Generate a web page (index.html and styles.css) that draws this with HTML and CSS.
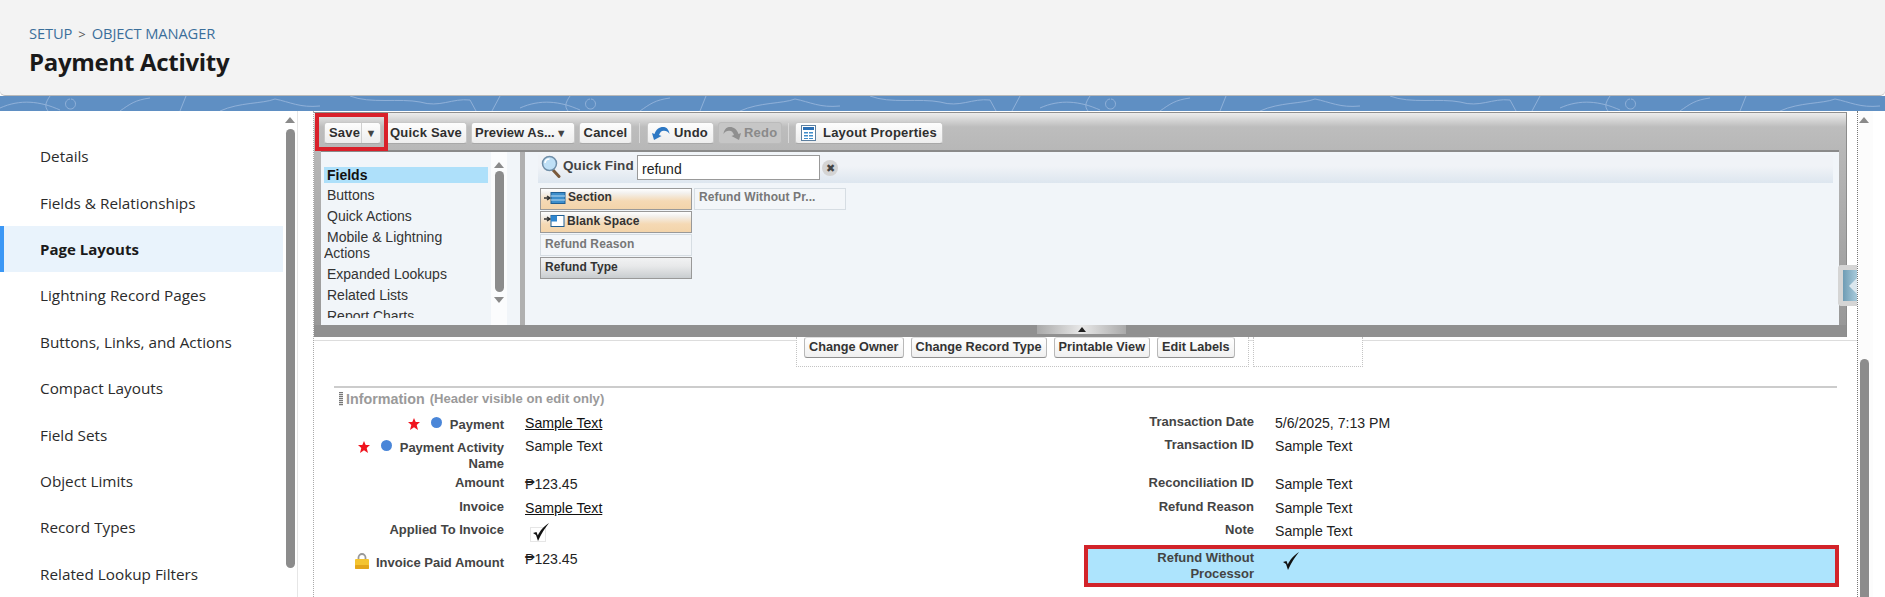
FILE: index.html
```html
<!DOCTYPE html>
<html lang="en">
<head>
<meta charset="utf-8">
<title>Payment Activity</title>
<link rel="stylesheet" href="styles.css">
</head>
<body>
<div class="app">
  <header class="header">
    <div class="crumbs"><span>SETUP</span><span class="crumb-sep">&gt;</span><span>OBJECT MANAGER</span></div>
    <h1 class="title">Payment Activity</h1>
  </header>
  <div class="band">
    <svg class="band-art" width="100%" height="15" aria-hidden="true">
      <defs>
        <pattern id="topo" width="520" height="15" patternUnits="userSpaceOnUse">
          <path d="M0 12C20 3 40 5 60 14M50 0C46 6 44 10 48 15M70 3a5 5 0 1 0 1 0M120 15C130 8 135 4 150 2M186 0L180 15M220 15C240 6 262 8 275 3C290 6 300 12 320 10M350 0C370 8 400 2 420 6C440 12 452 2 470 4L476 15M500 0L492 15" fill="none" stroke="#8fb0d8" stroke-width="1"/>
        </pattern>
      </defs>
      <rect width="100%" height="15" fill="url(#topo)"/>
    </svg>
  </div>
  <div class="main">
    <aside class="side">
      <nav class="side-list">
        <a class="side-item">Details</a>
        <a class="side-item">Fields &amp; Relationships</a>
        <a class="side-item is-active">Page Layouts</a>
        <a class="side-item">Lightning Record Pages</a>
        <a class="side-item">Buttons, Links, and Actions</a>
        <a class="side-item">Compact Layouts</a>
        <a class="side-item">Field Sets</a>
        <a class="side-item">Object Limits</a>
        <a class="side-item">Record Types</a>
        <a class="side-item">Related Lookup Filters</a>
      </nav>
      <div class="scroll side-scroll"><i class="arrow-up"></i><i class="thumb"></i></div>
    </aside>
    <section class="page">
      <div class="palette">
        <div class="toolbar">
          <button class="tb tb-save"><span class="save-text">Save</span><span class="caret-cell">▼</span></button>
          <button class="tb tb-quick">Quick Save</button>
          <button class="tb tb-preview">Preview As...<span class="caret">▼</span></button>
          <button class="tb tb-cancel">Cancel</button>
          <i class="tb-sep"></i>
          <button class="tb tb-undo">
            <svg width="20" height="16" viewBox="0 0 20 16"><path d="M3 15 1 8l2.500 1C5 4 9 1.500 13 2c3 .4 5 3 5.500 7-1.500-2.500-3.500-3.500-6-3.300C10.500 5.900 9 7 8 10l2.500 1z" fill="#2d78c4"/></svg>Undo</button>
          <button class="tb tb-redo">
            <svg width="20" height="16" viewBox="0 0 20 16"><path d="M17 15l2-7-2.500 1C15 4 11 1.500 7 2 4 2.400 2 5 1.500 9c1.500-2.500 3.500-3.500 6-3.300C9.500 5.900 11 7 12 10l-2.500 1z" fill="#8f8f8f"/></svg>Redo</button>
          <i class="tb-sep tb-sep-tight"></i>
          <button class="tb tb-props">
            <svg width="15" height="16" viewBox="0 0 15 16"><rect x=".5" y=".5" width="14" height="15" fill="#fff" stroke="#5c7f9f"/><rect x="2" y="2" width="11" height="3" fill="#2a6fb5"/><path d="M3 7h4v1.500H3zM8 7h4v1.500H8zM3 10h4v1.500H3zM8 10h4v1.500H8zM3 13h4v1H3zM8 13h4v1H8z" fill="#3f8cc9"/></svg>Layout Properties</button>
          <div class="annot annot-save"></div>
        </div>
        <div class="pal-body">
          <div class="pal-left">
            <ul class="cat-list">
              <li class="cat is-current">Fields</li>
              <li class="cat">Buttons</li>
              <li class="cat">Quick Actions</li>
              <li class="cat">Mobile &amp; Lightning Actions</li>
              <li class="cat">Expanded Lookups</li>
              <li class="cat">Related Lists</li>
              <li class="cat cat-cut">Report Charts</li>
            </ul>
            <div class="scroll cat-scroll"><i class="arrow-up"></i><i class="thumb"></i><i class="arrow-down"></i></div>
          </div>
          <div class="pal-right">
            <div class="quick">
              <svg class="lens" width="20" height="23" viewBox="0 0 20 23"><path d="M12 15l6 6.500" stroke="#7a5a3c" stroke-width="3" stroke-linecap="round"/><circle cx="8.500" cy="8.500" r="7" fill="#bfe0f6" stroke="#6f8ea8" stroke-width="1.500"/><path d="M4 8a4.500 4.500 0 0 1 4.500-4" stroke="#fff" stroke-width="1.500" fill="none"/></svg>
              <label class="quick-label">Quick Find</label>
              <input class="quick-input" value="refund">
              <span class="quick-clear">✖</span>
            </div>
            <div class="items">
              <div class="item item-add item-section"><svg width="23" height="14" viewBox="0 0 23 14"><path d="M1 7h5M4 5l3 2-3 2" stroke="#333" stroke-width="1.500" fill="none"/><rect x="8" y="1.500" width="14" height="11" fill="#3d8ecb" stroke="#1f5f94"/><path d="M8 5h14M8 9h14" stroke="#bcdcf2"/></svg>Section</div>
              <div class="item item-add"><svg width="22" height="14" viewBox="0 0 22 14"><path d="M1 5h5M4 3l3 2-3 2" stroke="#333" stroke-width="1.500" fill="none"/><rect x="8" y="1.500" width="13" height="11" fill="#fff" stroke="#1f5f94"/><rect x="8" y="1.500" width="6" height="6" fill="#2f86cf"/></svg>Blank Space</div>
              <div class="item item-used">Refund Reason</div>
              <div class="item item-field">Refund Type</div>
              <div class="item item-used item-section">Refund Without Pr...</div>
            </div>
          </div>
        </div>
        <div class="pal-foot"><span class="handle"><i class="handle-tri"></i></span></div>
      </div>
      <div class="actions">
        <div class="act-box">
          <button class="act">Change Owner</button>
          <button class="act">Change Record Type</button>
          <button class="act">Printable View</button>
          <button class="act">Edit Labels</button>
        </div>
        <div class="act-box act-box-empty"></div>
      </div>
      <div class="sec-head">
        <i class="grip"></i><span class="sec-title">Information</span><span class="sec-note">(Header visible on edit only)</span>
      </div>
      <div class="form">
        <div class="field">
          <div class="label p5"><svg class="star" width="12" height="12" viewBox="0 0 12 12"><path d="M6 0l1.700 4H12L8.700 7l1.300 5L6 9.300 2 12l1.300-5L0 4h4.300z" fill="#f0141e"/></svg><i class="dot"></i>Payment</div>
          <div class="value p3"><u>Sample Text</u></div>
        </div>
        <div class="field">
          <div class="label p2">Transaction Date</div>
          <div class="value p3">5/6/2025, 7:13 PM</div>
        </div>
        <div class="field">
          <div class="label p5"><svg class="star" width="12" height="12" viewBox="0 0 12 12"><path d="M6 0l1.700 4H12L8.700 7l1.300 5L6 9.300 2 12l1.300-5L0 4h4.300z" fill="#f0141e"/></svg><i class="dot"></i>Payment Activity<br>Name</div>
          <div class="value p3">Sample Text</div>
        </div>
        <div class="field">
          <div class="label p2">Transaction ID</div>
          <div class="value p3">Sample Text</div>
        </div>
        <div class="field">
          <div class="label p2">Amount</div>
          <div class="value p3">₱123.45</div>
        </div>
        <div class="field">
          <div class="label p2">Reconciliation ID</div>
          <div class="value p3">Sample Text</div>
        </div>
        <div class="field">
          <div class="label p3">Invoice</div>
          <div class="value p4"><u>Sample Text</u></div>
        </div>
        <div class="field">
          <div class="label p3">Refund Reason</div>
          <div class="value p4">Sample Text</div>
        </div>
        <div class="field">
          <div class="label p3">Applied To Invoice</div>
          <div class="value check-cell"><svg class="check" width="22" height="20" viewBox="0 0 22 20"><rect x="2.500" y="5.500" width="15" height="14" fill="none" stroke="#ccc" stroke-dasharray="1 1"/><path d="M5 11l3 2 2 6C13 12 17 6 21 1 15 5 12 9 9.800 13.500L8.500 10z" fill="#111"/></svg></div>
        </div>
        <div class="field">
          <div class="label p3">Note</div>
          <div class="value p4">Sample Text</div>
        </div>
        <div class="field">
          <div class="label p8"><svg class="lock" width="14" height="16" viewBox="0 0 14 16"><path d="M3.500 7V4.500a3.500 3.500 0 0 1 7 0V7" fill="none" stroke="#999" stroke-width="1.800"/><rect y="6" width="14" height="10" rx="1" fill="#f4c430"/><rect y="12" width="14" height="4" rx="1" fill="#e3a51a"/></svg>Invoice Paid Amount</div>
          <div class="value p6">₱123.45</div>
        </div>
        <div class="field is-marked">
          <div class="label p1">Refund Without<br>Processor</div>
          <div class="value"><svg class="check check-marked" width="20" height="20" viewBox="0 0 20 20"><path d="M3 11l3 2 2 6C11 12 15 6 19 1 13 5 10 9 7.800 13.500L6.500 10z" fill="#111"/></svg></div>
        </div>
      </div>
      <div class="side-tab"><i class="side-tab-tri"></i></div>
    </section>
    <div class="scroll page-scroll"><i class="arrow-up"></i><i class="spacer"></i><i class="thumb"></i></div>
  </div>
</div>
</body>
</html>
```

FILE: styles.css
```css
* { box-sizing: border-box; }
html, body { margin: 0; padding: 0; background: #fff; }
.app { width: 1885px; height: 597px; overflow: hidden; display: flex; flex-direction: column; background: #fff; font-family: "Liberation Sans", Arial, sans-serif; color: #222; }

.header { height: 96px; flex: none; padding: 22px 0 0 29px; background: #f3f3f3; border-bottom: 1px solid #b9b9b9; border-radius: 0 0 5px 5px; font-family: "Open Sans", sans-serif; }
.crumbs { font-size: 14.700px; line-height: 22px; color: #3b6f9b; font-weight: 400; letter-spacing: -.1px; }
.crumb-sep { margin: 0 6px; color: #555; font-size: 13px; }
.title { margin: 0; font-size: 24px; line-height: 33px; font-weight: 700; color: #1a1a1a; letter-spacing: -.3px; }

.band { height: 15px; flex: none; background: #5f8fc3; overflow: hidden; }
.band-art { display: block; }

.main { flex: 1; min-height: 0; display: flex; background: #fff; }

.side { width: 298px; flex: none; display: flex; border-right: 1px solid #e6e6e6; border-radius: 4px 0 0 0; overflow: hidden; }
.side-list { width: 283px; flex: none; padding-top: 22px; }
.side-item { display: flex; align-items: center; height: 46.4px; padding-left: 40px; font-family: "Open Sans", sans-serif; font-size: 15.300px; color: #2b2b2b; border-left: 0 solid transparent; }
.side-item.is-active { background: #e9f3fc; font-weight: 700; font-size: 15px; color: #1a1a1a; padding-left: 36px; border-left: 4px solid #3b97f5; }

.scroll { display: flex; flex-direction: column; align-items: center; flex: none; }
.arrow-up { width: 0; height: 0; border-left: 5px solid transparent; border-right: 5px solid transparent; border-bottom: 6px solid #8a8a8a; flex: none; }
.arrow-down { width: 0; height: 0; border-left: 5px solid transparent; border-right: 5px solid transparent; border-top: 6px solid #8a8a8a; flex: none; }
.thumb { display: block; width: 9px; background: #8c8c8c; border-radius: 5px 5px 0 0; flex: none; }
.side-scroll { width: 14px; padding: 6px 0 0 0; }
.side-scroll .arrow-up { margin-bottom: 3px; }
.side-scroll .thumb { height: 439px; border-radius: 5px; margin-top: 3px; }

.page { position: relative; flex: 1; min-width: 0; margin-left: 15px; border-left: 1px dotted #aaa; border-right: 1px dotted #777; }

.palette { position: relative; width: 1533px; height: 225px; margin: 1px 0 0 0; background: linear-gradient(#ececec 0, #bdbdbd 14px, #b7b7b7 38px, #969696 100%); border-top: 1px solid #8f8f8f; border-right: 1px solid #8c8c8c; display: flex; flex-direction: column; }

.toolbar { position: relative; height: 37px; flex: none; display: flex; align-items: flex-start; padding: 9px 0 0 10px; gap: 4px; }
.tb { height: 22px; margin: 0; padding: 0 4px; border: 1px solid #c8c8c8; border-bottom-color: #a8a8a8; border-radius: 3px; background: linear-gradient(#fdfdfd, #ededed); font: 700 13px/20px "Liberation Sans", Arial, sans-serif; letter-spacing: .2px; color: #2f2f2f; display: flex; align-items: center; white-space: nowrap; }
.tb-save { width: 57px; padding: 0 0 0 4px; }
.save-text { width: 33px; text-align: left; border-right: 1px solid #d0d0d0; }
.caret-cell { flex: 1; text-align: center; font-size: 11px; color: #444; }
.tb-quick { width: 82px; justify-content: center; }
.tb-preview { width: 104px; padding: 0 3px; letter-spacing: 0; }
.caret { font-size: 11px; color: #444; margin-left: 1px; }
.tb-cancel { width: 53px; justify-content: center; }
.tb-sep { width: 1px; height: 20px; background: #d9d9d9; margin: 1px 3px 0; flex: none; }
.tb-sep-tight { margin-right: 2px; margin-left: 2px; }
.tb-undo { width: 67px; padding: 0 3px; gap: 3px; }
.tb-redo { width: 64px; padding: 0 3px; gap: 2px; background: #c6c6c6; border-color: #bbb; color: #8a8a8a; }
.tb-props { width: 148px; padding: 0 5px; gap: 7px; }
.annot-save { position: absolute; left: 1px; top: 0; width: 73px; height: 38px; border: 4px solid #d9202a; }

.pal-body { height: 175px; flex: none; margin: 0 7px 0 7px; display: flex; border-top: 2px solid #8a8a8a; background: #f1f5f9; }
.pal-left { width: 204px; flex: none; display: flex; padding-left: 3px; border-right: 5px solid #b0b0b0; height: 173px; }
.cat-list { list-style: none; margin: 0; padding: 15px 0 0; width: 164px; height: 166px; overflow: hidden; flex: none; }
.cat { font-size: 14px; line-height: 16px; margin-bottom: 5px; text-indent: 3px; color: #333; }
.cat-cut { margin-bottom: 0; }
.cat.is-current { background: #aee0fa; font-weight: 700; color: #111; margin-bottom: 4px; }
.cat-scroll { width: 16px; margin-left: 3px; background: #fbfcfd; padding-top: 10px; height: 173px; }
.cat-scroll .thumb { height: 121px; border-radius: 5px; margin: 3px 0 5px; }

.pal-right { flex: 1; min-width: 0; padding: 3px 6px 0 13px; }
.quick { height: 28px; display: flex; align-items: flex-start; background: linear-gradient(#f0f3f7 40%, #dde6ef); padding-left: 3px; }
.lens { flex: none; }
.quick-label { font: 700 13.500px/22px "Liberation Sans", Arial, sans-serif; letter-spacing: .1px; color: #444; margin-left: 2px; width: 74px; }
.quick-input { width: 183px; height: 25px; padding: 2px 4px 0; border: 1px solid #999; background: #fff; font: 14px "Liberation Sans", Arial, sans-serif; color: #222; outline: 0; }
.quick-clear { width: 16px; height: 16px; margin: 5px 0 0 2px; border-radius: 50%; background: #d4d4d4; font-size: 11px; line-height: 16px; text-align: center; color: #444; margin-left: 2px; }

.items { margin: 5px 0 0 2px; display: grid; grid-auto-flow: column; grid-template-rows: repeat(4, 22px); grid-template-columns: 152px 152px; gap: 1px 2px; }
.item { border: 1px solid #999; font: 700 12px/18px "Liberation Sans", Arial, sans-serif; letter-spacing: .1px; padding-left: 4px; color: #333; display: flex; align-items: flex-start; white-space: nowrap; }
.item-section { line-height: 17px; }
.item-add { padding-left: 2px; background: linear-gradient(#fff 0, #f3f1ee 20%, #f5d9b4 60%, #f3d4aa 100%); }
.item-add svg { margin: 2px 2px 0 0; flex: none; }
.item-used { border-color: #d6dde3; color: #777; background: #f3f6f9; }
.item-field { background: linear-gradient(#f1f2f3, #e8e9ea 40%, #c9cdd0); color: #333; }

.pal-foot { position: relative; flex: 1; background: #909090; }
.handle { position: absolute; left: 723px; top: 0; width: 89px; height: 9px; background: linear-gradient(90deg, #a9a9a9, #e8e8e8 50%, #a9a9a9); display: flex; justify-content: center; align-items: center; }
.handle-tri { width: 0; height: 0; border-left: 4px solid transparent; border-right: 4px solid transparent; border-bottom: 5px solid #222; }

.actions { height: 49px; display: flex; padding-left: 482px; background: linear-gradient(#ddd, #ddd) 0 3px / 100% 1px no-repeat; }
.act-box { width: 453px; height: 30px; padding-left: 7px; display: flex; gap: 7px; align-items: flex-start; border: 1px dotted #c4c4c4; border-top: 0; background: #fff; }
.act-box-empty { width: 110px; margin-left: 4px; }
.act { height: 21px; padding: 0 4px; border: 1px solid #b9b9b9; border-top-color: #ddd; border-bottom-color: #8f8f8f; border-radius: 3px; background: linear-gradient(#fff, #f0f0f0); font: 700 12.700px/19px "Liberation Sans", Arial, sans-serif; color: #333; white-space: nowrap; }

.sec-head { margin: 0 20px 0 20px; height: 26px; border-top: 2px solid #ccc; display: flex; align-items: center; padding-left: 5px; padding-bottom: 3px; color: #9a9a9a; font-size: 14.300px; font-weight: 700; white-space: nowrap; }
.grip { width: 4px; height: 14px; margin-right: 3px; background: repeating-linear-gradient(#777 0 1px, #ddd 1px 2px); }
.sec-note { margin-left: 5px; font-size: 13.100px; }

.form { margin-left: 20px; display: grid; grid-template-columns: 750px 755px; grid-template-rows: 23px 38px 23px 23px 26px 42px; }
.field { display: flex; min-width: 0; }
.label { width: 170px; flex: none; text-align: right; font-size: 13px; font-weight: 700; line-height: 16px; color: #444; white-space: nowrap; }
.value { margin-left: 21px; font-size: 14.100px; line-height: 16px; color: #222; white-space: nowrap; }
.value u { color: #111; }
.p1 { padding-top: 1px; } .p2 { padding-top: 2px; } .p3 { padding-top: 3px; } .p4 { padding-top: 4px; } .p5 { padding-top: 5px; } .p6 { padding-top: 6px; } .p8 { padding-top: 8px; }
.star { margin-right: 11px; vertical-align: -1px; }
.dot { display: inline-block; width: 11px; height: 11px; border-radius: 50%; background: #4a86d8; margin-right: 8px; vertical-align: 1px; }
.lock { margin-right: 7px; vertical-align: -2px; }
.check-cell { padding-top: 3px; }
.check { display: block; margin-left: 3px; }
.is-marked { border: 4px solid #d2232a; background: #ade4fd; width: 755px; height: 42px; }
.is-marked .label { width: 166px; }
.is-marked .check-marked { margin: 2px 0 0 5px; }

.side-tab { position: absolute; right: 0; top: 154px; width: 19px; height: 41px; background: #fff; border: 1px solid #d5d5d5; border-width: 5px 0 5px 5px; border-radius: 4px 0 0 4px; overflow: hidden; }
.side-tab::before { content: ""; display: block; width: 100%; height: 100%; background: linear-gradient(90deg, #6f9cb4, #a9cbdb); }
.side-tab-tri { position: absolute; right: 0; top: 8px; width: 0; height: 0; border-top: 8px solid transparent; border-bottom: 8px solid transparent; border-right: 8px solid #dbe7ee; }

.page-scroll { width: 27px; padding: 6px 15px 0 0; height: 486px; background: linear-gradient(90deg, #fcfcfc 0 15px, #fff 15px); }
.page-scroll .spacer { flex: 1; }
.page-scroll .thumb { height: 238px; }
```
